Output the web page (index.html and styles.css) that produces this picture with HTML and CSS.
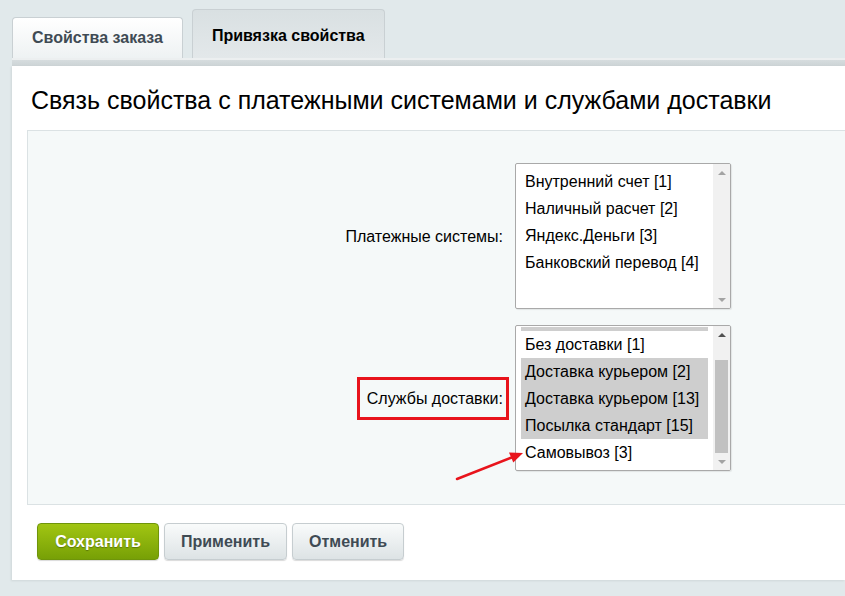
FILE: index.html
```html
<!DOCTYPE html>
<html lang="ru">
<head>
    <meta charset="UTF-8">
    <meta name="viewport" content="width=device-width, initial-scale=1.0">
    <title>Привязка свойства</title>
    <link rel="stylesheet" href="styles.css">
</head>
<body>
    <div class="page">
        <!-- Tabs -->
        <div class="tabs">
            <div class="tab">Свойства заказа</div>
            <div class="tab tab-active">Привязка свойства</div>
        </div>
        <div class="tabs-bar"></div>

        <div class="panel">
            <h1 class="panel-title">Связь свойства с платежными системами и службами доставки</h1>

            <div class="form-box">
                <div class="form-row">
                    <div class="form-label"><span>Платежные системы:</span></div>
                    <div class="listbox">
                        <div class="listbox-options">
                            <div class="option">Внутренний счет [1]</div>
                            <div class="option">Наличный расчет [2]</div>
                            <div class="option">Яндекс.Деньги [3]</div>
                            <div class="option">Банковский перевод [4]</div>
                        </div>
                        <div class="scrollbar">
                            <div class="scroll-btn"><span class="arrow-up"></span></div>
                            <div class="scroll-track"></div>
                            <div class="scroll-btn"><span class="arrow-down"></span></div>
                        </div>
                    </div>
                </div>

                <div class="form-row">
                    <div class="form-label"><span class="marked">Службы доставки:</span></div>
                    <div class="listbox">
                        <div class="listbox-options scrolled">
                            <div class="option selected option-cut"></div>
                            <div class="option">Без доставки [1]</div>
                            <div class="option selected">Доставка курьером [2]</div>
                            <div class="option selected">Доставка курьером [13]</div>
                            <div class="option selected">Посылка стандарт [15]</div>
                            <div class="option">Самовывоз [3]</div>
                        </div>
                        <div class="scrollbar">
                            <div class="scroll-btn"><span class="arrow-up active"></span></div>
                            <div class="scroll-track"><div class="scroll-thumb"></div></div>
                            <div class="scroll-btn"><span class="arrow-down"></span></div>
                        </div>
                    </div>
                </div>

                <!-- annotation arrow -->
                <svg class="pointer" width="80" height="40" viewBox="0 0 80 40">
                    <line x1="6" y1="33" x2="62" y2="11" stroke="#e8141c" stroke-width="2.5" stroke-linecap="round"/>
                    <polygon points="72,7 62.3,16.6 58,6.4" fill="#e8141c"/>
                </svg>
            </div>

            <div class="buttons">
                <button class="btn btn-save">Сохранить</button>
                <button class="btn">Применить</button>
                <button class="btn">Отменить</button>
            </div>
        </div>
    </div>
</body>
</html>
```

FILE: styles.css
```css
* {
    margin: 0;
    padding: 0;
    box-sizing: border-box;
}

body {
    font-family: 'Liberation Sans', Arial, sans-serif;
    background: #e1e9eb;
    color: #000;
    width: 845px;
    height: 596px;
    overflow: hidden;
}

.page {
    padding-top: 9px;
}

/* Tabs */
.tabs {
    display: flex;
    align-items: flex-end;
    gap: 9px;
    padding-left: 12px;
}

.tab {
    font-size: 16px;
    font-weight: bold;
    line-height: 17px;
    color: #3f4b54;
    padding: 11px 19px 12px;
    border: 1px solid #c9d0d3;
    border-bottom: none;
    border-radius: 4px 4px 0 0;
    background: linear-gradient(#ffffff, #eef2f3);
}

.tab-active {
    color: #000;
    padding: 17px 19px 14px;
    background: linear-gradient(#d9e0e2, #e3e8ea);
}

.tabs-bar {
    margin-left: 12px;
    height: 8px;
    background: linear-gradient(#eceff0 0, #eceff0 2px, #d6dcde 2px, #ccd3d5 100%);
}

/* Main panel */
.panel {
    margin-left: 12px;
    background: #fff;
    padding: 0 0 20px 15px;
    box-shadow: -1px 1px 2px rgba(0, 0, 0, 0.08);
}

.panel-title {
    font-size: 25px;
    font-weight: normal;
    line-height: 28px;
    color: #000;
    padding: 20px 0 0 4px;
}

.form-box {
    position: relative;
    margin-top: 16px;
    background: #f5f9f9;
    border: 1px solid #dbe2e4;
    border-right: none;
    padding: 32px 0 33px;
    display: flex;
    flex-direction: column;
    gap: 16px;
}

.form-row {
    display: grid;
    grid-template-columns: 475px 216px;
    column-gap: 12px;
    align-items: center;
}

.form-label {
    text-align: right;
    font-size: 16px;
    line-height: 17px;
}

.form-label .marked {
    display: inline-block;
    border: 3px solid #e8141c;
    padding: 10px 3px 10px 7px;
    margin-right: -6px;
}

/* List box */
.listbox {
    height: 146px;
    background: #fff;
    border: 1px solid #a9a9a9;
    border-radius: 2px;
    display: flex;
    overflow: hidden;
    box-shadow: 1px 1px 1px rgba(0, 0, 0, 0.08);
}

.listbox-options {
    flex: 1;
    padding: 4px 5px 0;
}

.listbox-options.scrolled {
    padding-top: 1px;
}

.option {
    font-size: 16px;
    line-height: 27px;
    height: 27px;
    padding-left: 4px;
    white-space: nowrap;
}

.option.selected {
    background: #cecece;
}

.option-cut {
    height: 4px;
}

.scrollbar {
    width: 17px;
    background: #f1f1f1;
    display: flex;
    flex-direction: column;
}

.scroll-btn {
    height: 17px;
    display: flex;
    align-items: center;
    justify-content: center;
}

.scroll-track {
    flex: 1;
}

.scroll-thumb {
    margin: 17px 2px 0;
    height: 93px;
    background: #c1c1c1;
}

.arrow-up {
    width: 0;
    height: 0;
    border-left: 4px solid transparent;
    border-right: 4px solid transparent;
    border-bottom: 4px solid #a3a3a3;
}

.arrow-up.active {
    border-bottom-color: #505050;
}

.arrow-down {
    width: 0;
    height: 0;
    border-left: 4px solid transparent;
    border-right: 4px solid transparent;
    border-top: 4px solid #a3a3a3;
}

.pointer {
    position: absolute;
    left: 423px;
    top: 315px;
}

/* Buttons */
.buttons {
    display: flex;
    gap: 5px;
    margin-top: 18px;
    padding-left: 10px;
}

.btn {
    height: 37px;
    padding: 0 16px;
    font-family: 'Liberation Sans', Arial, sans-serif;
    font-size: 16px;
    font-weight: bold;
    color: #3f4b54;
    background: linear-gradient(#f9fbfb, #dde3e5);
    border: 1px solid #c6cdd0;
    border-radius: 4px;
    box-shadow: 0 1px 1px rgba(0, 0, 0, 0.15);
    cursor: pointer;
}

.btn-save {
    width: 122px;
    padding: 0;
    color: #fff;
    background: linear-gradient(#a1c512, #77a006);
    border-color: #6f950a;
    text-shadow: 0 1px 1px rgba(0, 0, 0, 0.3);
}
```
